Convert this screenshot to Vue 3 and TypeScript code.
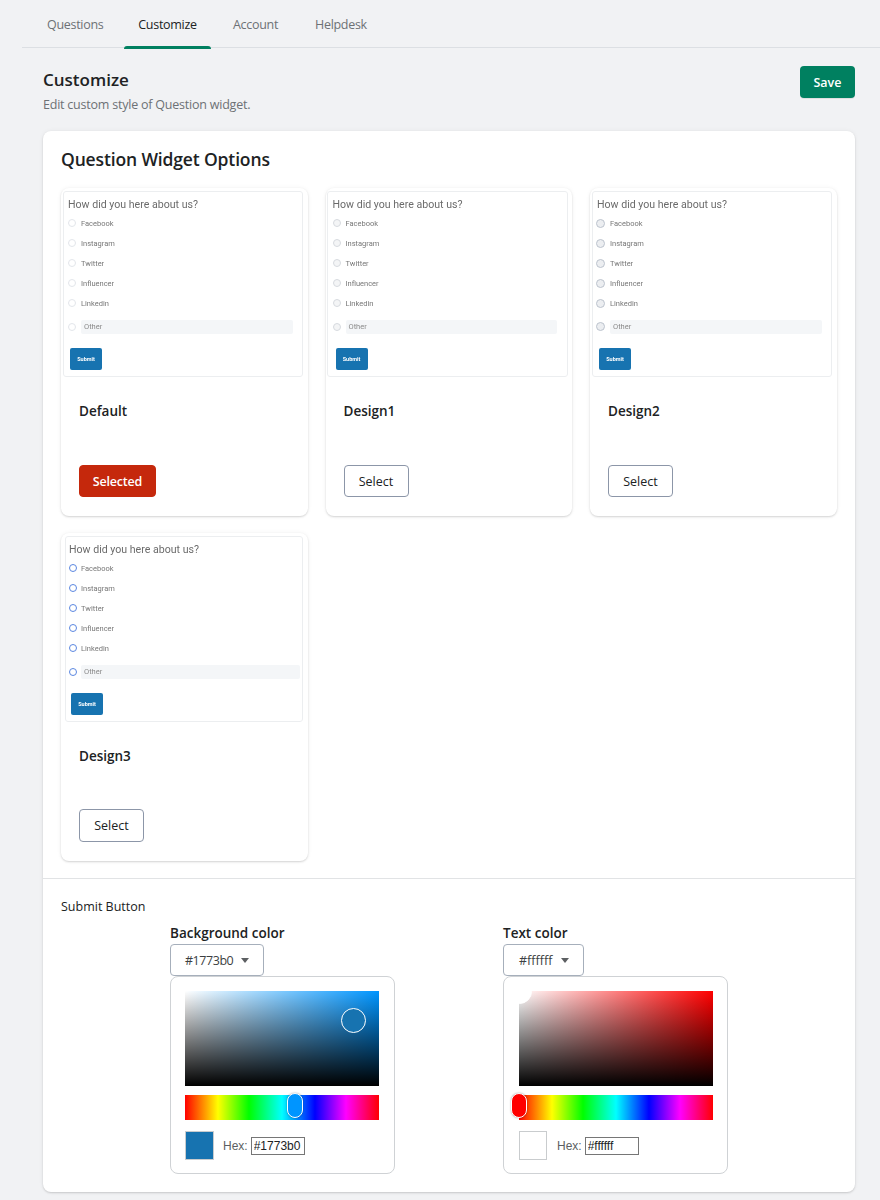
<script setup lang="ts">
const tabs = ['Questions', 'Customize', 'Account', 'Helpdesk']
const options = ['Facebook', 'Instagram', 'Twitter', 'Influencer', 'Linkedin']
const designs = [
  { name: 'Default', cls: 'd0', selected: true },
  { name: 'Design1', cls: 'd1', selected: false },
  { name: 'Design2', cls: 'd2', selected: false },
  { name: 'Design3', cls: 'd3', selected: false },
]
const pickers = [
  { label: 'Background color', value: '#1773b0', cls: 'blue' },
  { label: 'Text color', value: '#ffffff', cls: 'white' },
]
</script>

<template>
  <div class="page">
    <nav class="tabs">
      <a v-for="t in tabs" :key="t" class="tab" :class="{ active: t === 'Customize' }">{{ t }}</a>
    </nav>
    <header class="head">
      <div>
        <h1>Customize</h1>
        <p>Edit custom style of Question widget.</p>
      </div>
      <button class="save">Save</button>
    </header>
    <main class="panel">
      <section class="top">
        <h2>Question Widget Options</h2>
        <div class="grid">
          <article v-for="d in designs" :key="d.name" class="design" :class="d.cls">
            <div class="preview">
              <div class="q">How did you here about us?</div>
              <div v-for="o in options" :key="o" class="opt"><i class="radio"></i><span>{{ o }}</span></div>
              <div class="opt other"><i class="radio"></i><span class="otherbox">Other</span></div>
              <div class="submit">Submit</div>
            </div>
            <div class="body">
              <h3>{{ d.name }}</h3>
              <button v-if="d.selected" class="btn selected">Selected</button>
              <button v-else class="btn">Select</button>
            </div>
          </article>
        </div>
      </section>
      <section class="bottom">
        <h4>Submit Button</h4>
        <div class="pickers">
          <div v-for="p in pickers" :key="p.label" class="picker" :class="p.cls">
            <div class="plabel">{{ p.label }}</div>
            <button class="drop">{{ p.value }}<i class="caret"></i></button>
            <div class="pop">
              <div class="sat"><i class="knob"></i></div>
              <div class="hue"><i class="thumb"></i></div>
              <div class="hexrow">
                <span class="swatch"></span>
                <label class="hexlabel">Hex:</label>
                <input class="hex" :value="p.value" readonly />
              </div>
            </div>
          </div>
        </div>
      </section>
    </main>
  </div>
</template>

<style>
html, body { margin: 0; background: #f1f2f4; }
</style>

<style scoped>
* { box-sizing: border-box; }
.page {
  width: 880px; height: 1200px; overflow: hidden; background: #f1f2f4; padding-left: 22px;
  font-family: "Open Sans", "Noto Sans", sans-serif; color: #202223;
}
.tabs { display: flex; height: 48px; border-bottom: 1px solid #dcdfe3; }
.tab {
  position: relative; display: block; padding: 16px 0 0; height: 48px;
  font-size: 12.5px; line-height: 17px; letter-spacing: -.3px; color: #6d7175; white-space: nowrap;
}
.tab:first-child { width: 102px; padding-left: 25px; }
.tab.active { color: #202223; width: 87px; text-align: center; margin-right: 22px; }
.tab.active::after { content: ""; position: absolute; left: 0; right: 0; bottom: -1px; height: 3px; background: #008060; border-radius: 3px 3px 0 0; }
.tab:nth-child(3) { width: 82px; }
.head { display: flex; justify-content: space-between; align-items: flex-start; padding: 18px 25px 0 21px; height: 83px; }
h1 { margin: 2px 0 0; font-size: 17px; line-height: 24px; font-weight: 600; }
.head p { margin: 3px 0 0; font-size: 12.5px; line-height: 20px; letter-spacing: -.22px; color: #6d7175; }
.save {
  width: 55px; height: 32px; border: 0; border-radius: 4px; background: #008060; color: #fff;
  font: 600 12.5px "Open Sans", sans-serif; box-shadow: 0 1px 0 rgba(0,0,0,.08);
}
.panel { width: 812px; margin-left: 21px; height: 1061px; background: #fff; border-radius: 8px; box-shadow: 0 0 5px rgba(23,24,24,.05), 0 1px 2px rgba(0,0,0,.15); }
.top { padding: 17px 18px 18px; height: 748px; border-bottom: 1px solid #e1e3e5; }
h2 { margin: 0 0 18px; font-size: 17.5px; line-height: 22px; font-weight: 600; letter-spacing: -.14px; }
.grid { display: grid; grid-template-columns: repeat(3, 246.5px); column-gap: 18px; row-gap: 17.5px; }
.design { height: 327.5px; border-radius: 8px; background: #fff; box-shadow: 0 0 5px rgba(23,24,24,.05), 0 1px 2px rgba(0,0,0,.15); padding-top: 3px; display: flex; flex-direction: column; }
.preview {
  position: relative; height: 185.5px; margin: 0 5px 0 2px; border: 1px solid #eceef0; border-radius: 3px;
  font-family: Roboto, "Liberation Sans", sans-serif; color: #6b6b6b; padding: 5px 4px; filter: blur(.3px);
}
.d1 .preview { margin: 0 4px 0 1px; padding: 5px; }
.d2 .preview { margin: 0 5px 0 2px; }
.d3 .preview { margin: 0 5px 0 4px; padding: 5px 3px; }
.q { font-size: 10.6px; line-height: 14px; margin: 1px 0 1px; }
.opt { display: flex; align-items: center; height: 20.1px; font-size: 7.5px; color: #777; }
.radio { width: 8px; height: 8px; border-radius: 50%; border: 1px solid #e2e5ea; margin-right: 5px; flex: none; background: #fff; }
.d1 .radio { border-color: #d6d9de; background: #f4f5f6; }
.d2 .radio { border-color: #bcc3cd; background: #eceef1; width: 9px; height: 9px; margin-left: -1px; }
.d3 .radio { border: 1.5px solid #5a86e0; margin-right: 4px; }
.other { margin-top: 3px; height: 21px; }
.otherbox { flex: 1; height: 14px; line-height: 14px; background: #f4f6f8; border-radius: 2px; padding-left: 3px; margin-right: 5px; color: #8a8a8a; }
.d3 .otherbox { margin-right: -1px; }
.submit {
  position: absolute; left: 6px; top: 156px; width: 32px; height: 22px; background: #1773b0; border-radius: 2px;
  color: #fff; font-size: 5.5px; font-weight: 700; line-height: 22px; text-align: center;
}
.d1 .submit { left: 8px; }
.d3 .submit { left: 5px; }
.body { flex: 1; padding: 24px 18px 18.5px; display: flex; flex-direction: column; align-items: flex-start; justify-content: space-between; }
h3 { margin: 0; font-size: 13.5px; line-height: 20px; font-weight: 600; }
.btn { height: 32px; width: 65px; padding: 0; border: 1px solid #8c96a8; border-radius: 4px; background: #fff; color: #202223; font: 400 12.5px "Open Sans", sans-serif; }
.d3 .btn { height: 33px; }
.btn.selected { width: 77px; background: #c5280c; border-color: #c5280c; color: #fff; font-weight: 600; letter-spacing: -.2px; }
.bottom { padding: 19px 18px 0; }
h4 { margin: 0; font-size: 12.5px; line-height: 18px; font-weight: 500; }
.pickers { display: flex; padding-left: 109px; margin-top: 8px; }
.picker { width: 333px; }
.plabel { font-size: 13.5px; line-height: 18px; font-weight: 600; }
.drop {
  display: flex; align-items: center; height: 32px; margin-top: 2px; padding: 0 14px; border: 1px solid #a6afbb; border-radius: 4px;
  background: #fff; color: #3c3f42; font: 400 12.5px "Open Sans", sans-serif; letter-spacing: -.45px;
}
.white .drop { padding-left: 15px; letter-spacing: 0; }
.caret { width: 0; height: 0; border-left: 4px solid transparent; border-right: 4px solid transparent; border-top: 5px solid #5c5f62; margin-left: 8px; }
.white .caret { margin-left: 9px; }
.pop { width: 225px; height: 198px; border: 1px solid #cfd2d5; border-radius: 8px; padding: 14px 14px 0; background: #fff; }
.white .pop { padding-left: 15px; }
.sat { position: relative; width: 194px; height: 95px; overflow: hidden; }
.blue .sat { background: linear-gradient(to top, #000, rgba(0,0,0,0)), linear-gradient(to right, #fff, #0095ff); }
.white .sat { background: linear-gradient(to top, #000, rgba(0,0,0,0)), linear-gradient(to right, #fff, #ff0000); }
.knob { position: absolute; width: 25px; height: 25px; border-radius: 50%; border: 1px solid #fff; }
.blue .knob { left: 156px; top: 17px; background: #1773b0; }
.white .knob { left: -12px; top: -12px; background: #fff; }
.hue {
  position: relative; width: 194px; height: 25px; margin-top: 9px;
  background: linear-gradient(to right, #f00 0%, #ff0 17%, #0f0 33%, #0ff 50%, #00f 67%, #f0f 83%, #f00 100%);
}
.thumb { position: absolute; top: -2px; width: 16px; height: 25px; border-radius: 8px; border: 1px solid #fff; box-shadow: 0 0 2px rgba(0,0,0,.35); }
.blue .thumb { left: 102px; background: #0095ff; }
.white .thumb { left: -8px; background: #f00; }
.hexrow { display: flex; align-items: center; margin-top: 11px; height: 29px; }
.swatch { width: 29px; height: 29px; border: 1px solid #c9ccce; }
.blue .swatch { background: #1773b0; }
.white .swatch { background: #fff; width: 28px; }
.hexlabel { margin-left: 9px; font: 12px "Liberation Sans", sans-serif; color: #5c5f62; }
.white .hexlabel { margin-left: 10px; }
.hex { margin-left: 3px; width: 54px; height: 18px; padding: 0 2px; border: 1px solid #767676; font: 12px "Liberation Sans", sans-serif; color: #202223; outline: none; background: #fff; }
</style>
